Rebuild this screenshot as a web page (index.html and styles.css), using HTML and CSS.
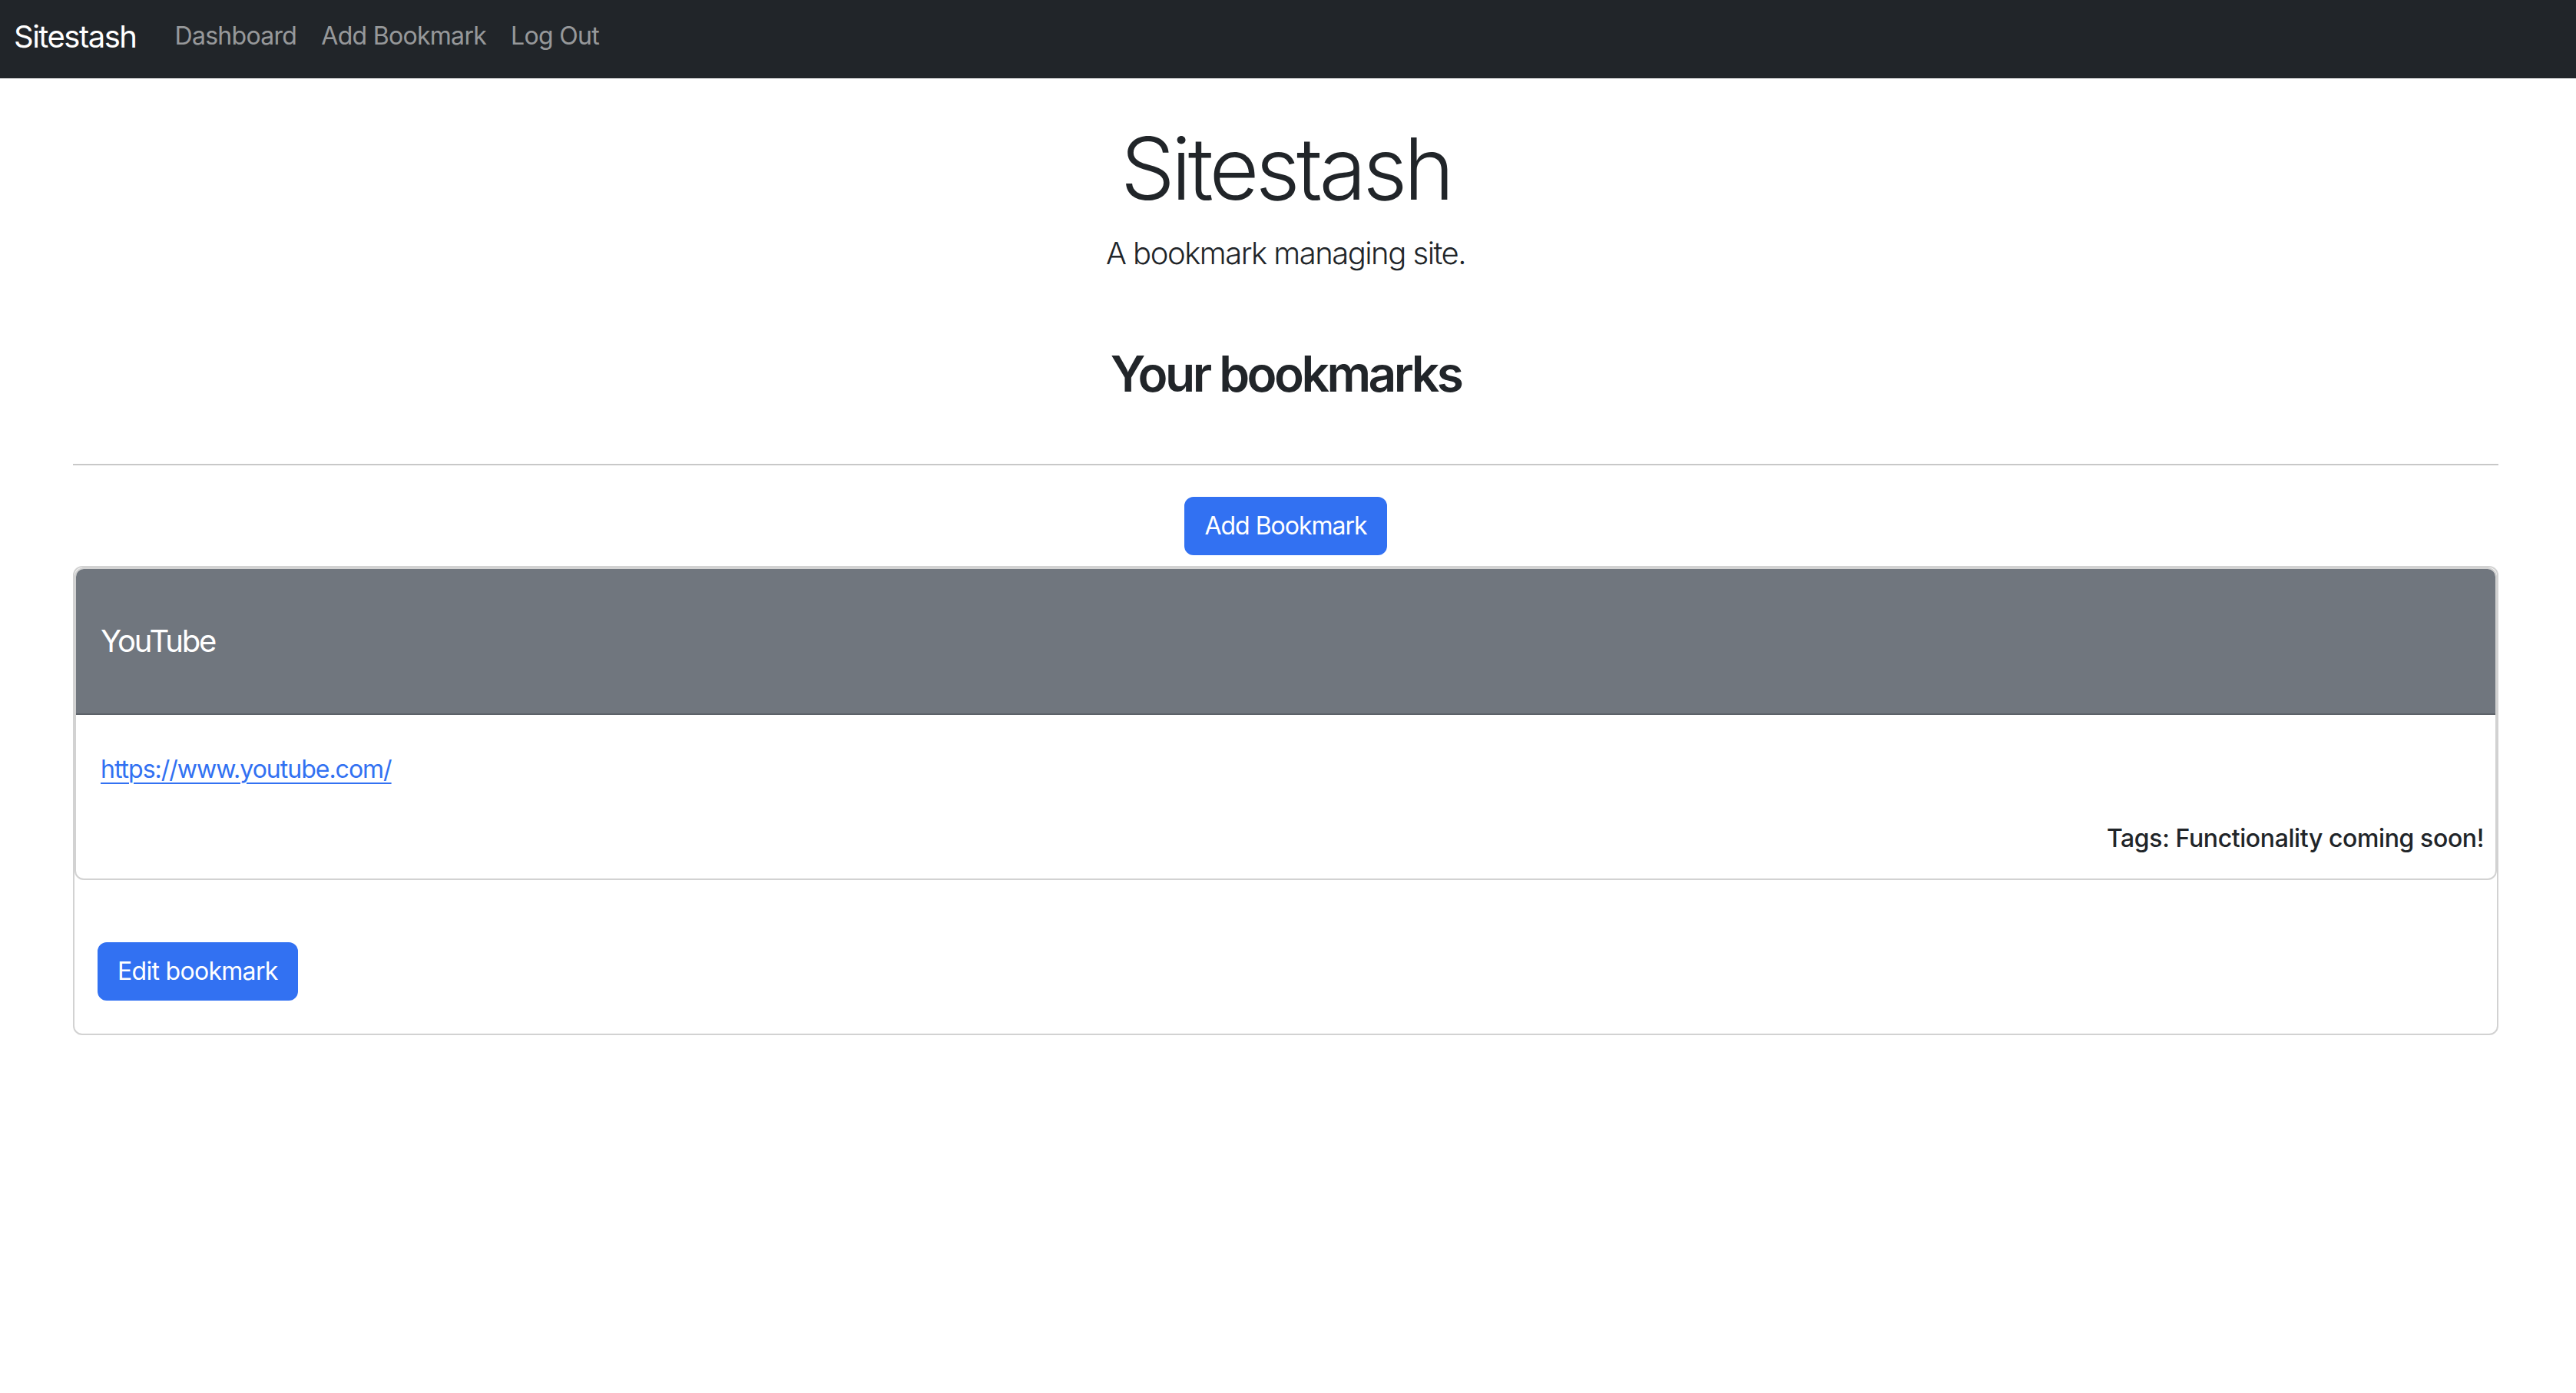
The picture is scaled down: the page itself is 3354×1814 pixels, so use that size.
FILE: index.html
```html
<!DOCTYPE html>
<html lang="en">
<head>
<meta charset="utf-8">
<title>Sitestash</title>
<link rel="stylesheet" href="styles.css">
</head>
<body>
<nav class="navbar">
  <a class="brand" href="#">Sitestash</a>
  <ul class="nav">
    <li><a class="nav-link" href="#">Dashboard</a></li>
    <li><a class="nav-link" href="#">Add Bookmark</a></li>
    <li><a class="nav-link" href="#">Log Out</a></li>
  </ul>
</nav>
<main class="container">
  <h1 class="display">Sitestash</h1>
  <p class="lead">A bookmark managing site.</p>
  <h2 class="section-title">Your bookmarks</h2>
  <hr class="divider">
  <div class="actions">
    <a class="btn" href="#">Add Bookmark</a>
  </div>
  <div class="card outer">
    <div class="card inner">
      <div class="card-header">YouTube</div>
      <div class="card-body">
        <a class="link" href="#">https://www.youtube.com/</a>
        <p class="tags">Tags: Functionality coming soon!</p>
      </div>
    </div>
    <div class="outer-body">
      <a class="btn" href="#">Edit bookmark</a>
    </div>
  </div>
</main>
</body>
</html>
```

FILE: styles.css
```css
* { box-sizing: border-box; }
html, body { margin: 0; padding: 0; background: #fff; }
body {
  font-family: Inter, "Noto Sans", "Liberation Sans", sans-serif;
  color: #212529;
  font-size: 32px;
  line-height: 48px;
}
.navbar {
  height: 102px;
  background: #212529;
  display: flex;
  align-items: flex-start;
  padding: 18px 0 0 18px;
}
.brand {
  font-size: 40px;
  line-height: 60px;
  color: #fff;
  text-decoration: none;
  margin-right: 34px;
  letter-spacing: -1.5px;
}
.nav {
  list-style: none;
  margin: 5px 0 0 0;
  padding: 0;
  display: flex;
}
.nav-link {
  display: block;
  padding: 0 16px;
  font-size: 32px;
  line-height: 48px;
  color: rgba(255, 255, 255, 0.55);
  text-decoration: none;
  letter-spacing: -0.7px;
}
.container {
  margin: 0 101px 0 95px;
  text-align: center;
}
.display {
  margin: 50px 0 0 0;
  font-size: 112px;
  line-height: 134px;
  font-weight: 300;
  letter-spacing: -4.6px;
}
.lead {
  margin: 14px 0 0 0;
  font-size: 40px;
  line-height: 60px;
  font-weight: 300;
  letter-spacing: -1.5px;
}
.section-title {
  margin: 88px 0 0 0;
  font-size: 64px;
  line-height: 77px;
  font-weight: 600;
  letter-spacing: -3.5px;
}
.divider {
  margin: 79px 0 0 0;
  border: 0;
  border-top: 2px solid #c8c8c8;
}
.actions {
  margin-top: 41px;
  display: flex;
  justify-content: center;
}
.btn {
  display: inline-block;
  background: #3271f2;
  color: #fff;
  border: 2px solid #3271f2;
  border-radius: 12px;
  padding: 12px 24px;
  font-size: 32px;
  line-height: 48px;
  text-decoration: none;
  letter-spacing: -1px;
}
.card {
  border: 2px solid #d2d2d2;
  border-radius: 12px;
  text-align: left;
}
.outer {
  margin-top: 14px;
  overflow: hidden;
}
.inner {
  margin: 0;
  overflow: hidden;
}
.card-header {
  background: #70767e;
  color: #fff;
  font-size: 40px;
  line-height: 48px;
  padding: 70px 32px;
  border-bottom: 2px solid #5c6168;
  font-weight: 400;
  letter-spacing: -2.1px;
}
.card-body {
  padding: 47px 15px 28px 32px;
}
.link {
  display: block;
  color: #3271f2;
  text-decoration: underline;
  text-underline-offset: 6px;
  text-decoration-thickness: 2px;
  letter-spacing: -1px;
  width: max-content;
}
.tags {
  margin: 42px 0 0 0;
  text-align: right;
  font-weight: 500;
  letter-spacing: -0.4px;
}
.outer-body {
  padding: 81px 32px 43px 30px;
}
.outer-body .btn {
  letter-spacing: -0.7px;
}
```
